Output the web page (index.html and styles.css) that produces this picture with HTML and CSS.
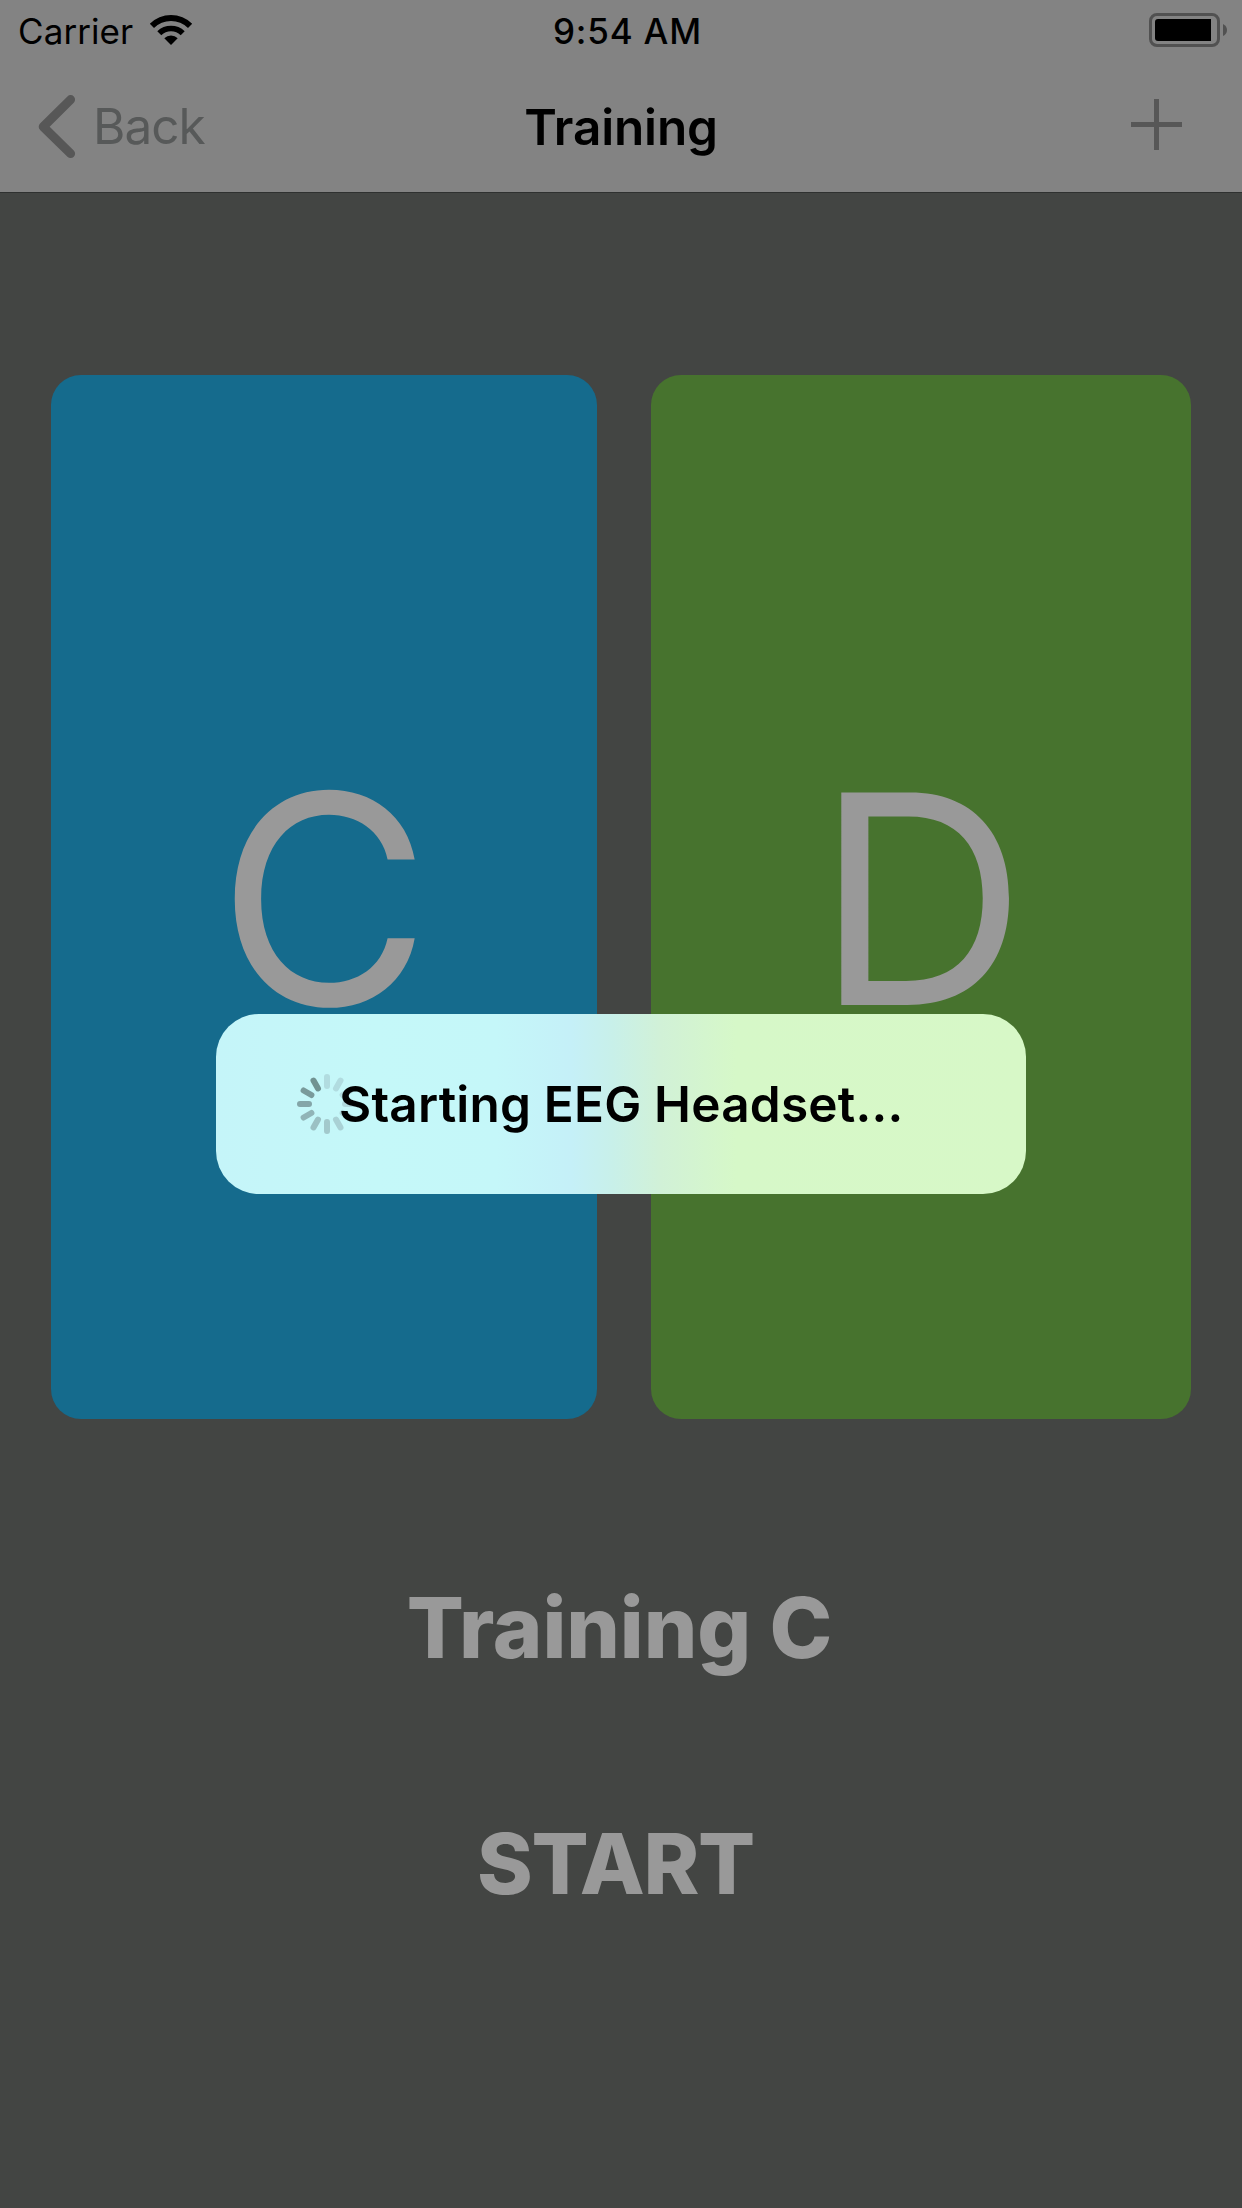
FILE: index.html
```html
<!DOCTYPE html>
<html lang="en">
<head>
<meta charset="utf-8">
<title>Training</title>
<link rel="stylesheet" href="styles.css">
</head>
<body>
<div class="screen">
  <header class="top">
    <div class="status">
      <div class="status-left">
        <span class="carrier">Carrier</span>
        <svg class="wifi" width="44" height="32" viewBox="149 14 44 32">
          <path d="M149.8 23.8A30 30 0 0 1 192.2 23.8L188 28A24 24 0 0 0 154 28Z"/>
          <path d="M157.3 31.3A19.4 19.4 0 0 1 184.7 31.3L180.7 35.3A13.7 13.7 0 0 0 161.3 35.3Z"/>
          <path d="M164.3 38.3A9.5 9.5 0 0 1 177.7 38.3L171 45Z"/>
        </svg>
      </div>
      <span class="time">9:54 AM</span>
      <div class="status-right">
        <svg class="battery" width="78" height="34" viewBox="0 0 78 34">
          <rect class="battery-shell" x="1.5" y="1.5" width="68" height="31" rx="6.5"/>
          <path d="M9 6H62V28H9a3 3 0 0 1-3-3V9a3 3 0 0 1 3-3Z"/>
          <path class="battery-tip" d="M74 11Q78 13 78 17T74 23Z"/>
        </svg>
      </div>
    </div>
    <nav class="nav">
      <a class="back">
        <svg class="chevron" width="38" height="64" viewBox="0 0 38 64"><path d="M32.6 4.6L5.2 31.7L32.6 58.6"/></svg>
        <span>Back</span>
      </a>
      <h1 class="title">Training</h1>
      <div class="add">
        <svg class="plus" width="51" height="51" viewBox="0 0 51 51"><path d="M23 0h5v23h23v5H28v23h-5V28H0v-5h23Z"/></svg>
      </div>
    </nav>
  </header>
  <main class="content">
    <div class="cards">
      <div class="card card-c">C</div>
      <div class="card card-d">D</div>
    </div>
    <div class="label">Training C</div>
    <div class="start">START</div>
  </main>
  <div class="hud">
    <svg class="spinner" width="60" height="60" viewBox="-30 -30 60 60">
      <g stroke-width="6" stroke-linecap="round">
        <path stroke="#b1dce0" d="M0-27V-18"/>
        <path stroke="#b1dce0" d="M0-27V-18" transform="rotate(30)"/>
        <path stroke="#b1dce0" d="M0-27V-18" transform="rotate(60)"/>
        <path stroke="#b0dade" d="M0-27V-18" transform="rotate(90)"/>
        <path stroke="#add6da" d="M0-27V-18" transform="rotate(120)"/>
        <path stroke="#a9d1d5" d="M0-27V-18" transform="rotate(150)"/>
        <path stroke="#a2c9cc" d="M0-27V-18" transform="rotate(180)"/>
        <path stroke="#9bc0c3" d="M0-27V-18" transform="rotate(210)"/>
        <path stroke="#91b4b7" d="M0-27V-18" transform="rotate(240)"/>
        <path stroke="#84a5a8" d="M0-27V-18" transform="rotate(270)"/>
        <path stroke="#799a9b" d="M0-27V-18" transform="rotate(300)"/>
        <path stroke="#719291" d="M0-27V-18" transform="rotate(330)"/>
      </g>
    </svg>
    <span class="hud-text">Starting EEG Headset...</span>
  </div>
</div>
</body>
</html>
```
FILE: styles.css
```css
* { box-sizing: border-box; }
body { margin: 0; font-family: Inter, "Liberation Sans", sans-serif; }
.screen {
  position: relative;
  width: 1242px;
  height: 2208px;
  background: #434543;
  overflow: hidden;
}
.top { height: 193px; background: #838383; border-bottom: 1px solid #2f3130; }

.status {
  display: grid;
  grid-template-columns: 1fr auto 1fr;
  align-items: start;
  height: 60px;
  font-size: 35px;
  line-height: 62px;
  color: #000;
}
.status-left { display: flex; padding-left: 18px; }
.carrier { letter-spacing: 0.08px; }
.wifi { margin: 14px 0 0 16px; }
.time { padding-left: 13px; font-weight: 550; letter-spacing: 0.8px; }
.status-right { display: flex; justify-content: flex-end; padding: 13px 15px 0 0; }
.battery-shell { fill: none; stroke: #515151; stroke-width: 3; }
.battery-tip { fill: #515151; }

.nav {
  display: grid;
  grid-template-columns: 1fr auto 1fr;
  height: 132px;
  font-size: 49.5px;
  line-height: 132px;
}
.back { display: flex; padding-left: 38px; color: #575959; letter-spacing: -1px; }
.chevron { margin: 35px 17px 0 0; fill: none; stroke: #575757; stroke-width: 9; stroke-linecap: round; stroke-linejoin: round; }
.title { margin: 0; font-size: 49.5px; font-weight: 600; line-height: 134px; letter-spacing: -0.15px; color: #000; }
.add { display: flex; justify-content: flex-end; padding: 39px 60px 0 0; }
.plus { fill: #575757; }

.content { padding: 182px 51px 0; color: #999; text-align: center; }
.cards { display: grid; grid-template-columns: 546px 540px; gap: 54px; }
.card {
  height: 1044px;
  border-radius: 30px;
  font-size: 292px;
  line-height: 1047px;
}
.card-c { background: #156b8d; }
.card-d { background: #47732e; }
.label, .start { font-size: 84.5px; font-weight: 800; line-height: 120px; }
.label { margin-top: 148px; padding-right: 3px; letter-spacing: -0.1px; }
.start { margin-top: 116px; padding-right: 11px; letter-spacing: -1.3px; }

.hud {
  position: absolute;
  left: 216px;
  top: 1014px;
  display: flex;
  align-items: center;
  width: 810px;
  height: 180px;
  padding-left: 81px;
  border-radius: 43px;
  background: linear-gradient(90deg, #c5f5f9 0, #c5f8f9 160px, #c5f7f9 280px, #c5f0f8 355px, #c8f0ea 395px, #d1f1d7 445px, #d6f8c8 520px, #d7f8c7 100%);
}
.hud-text {
  margin-left: -18px;
  font-size: 49.5px;
  font-weight: 600;
  line-height: 60px;
  letter-spacing: 0.2px;
  white-space: nowrap;
  color: #000;
}
```
